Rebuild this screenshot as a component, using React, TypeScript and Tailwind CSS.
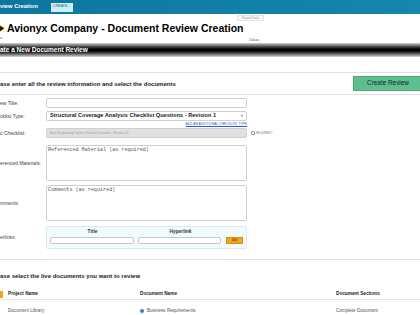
import React from "react";

const Label = ({ text }: { text: string }) => (
  <div className="w-[46px] shrink-0 text-[5px] leading-none text-[#444]">{text}</div>
);

const TopBar = () => (
  <div className="h-[14px] bg-gradient-to-r from-[#0b77a0] to-[#1586ae] flex items-center">
    <span className="text-[5.8px] font-semibold text-white leading-none">view Creation</span>
    <button className="ml-[13px] h-[9px] w-[22px] bg-[#cdeff6] text-[3.6px] leading-none text-[#1a5c7a] flex items-center justify-center">
      CREATE...
    </button>
  </div>
);

const TitleBlock = () => (
  <div className="relative h-[29px]">
    <div className="absolute left-[237px] top-[1px] h-[6px] w-[27px] border border-[#e4e4e4] bg-[#f7f7f7] text-[2.8px] leading-none text-[#999] flex items-center justify-center">
      Expand Tools
    </div>
    <div className="flex items-center pt-[8px] h-[20px]">
      <svg width="7" height="9" viewBox="0 0 7 9" className="shrink-0">
        <polygon points="0,1 5,4 0,8" fill="#f59e0b" />
        <polygon points="0,2 4,4.5 0,7" fill="#111" />
      </svg>
      <h1 className="text-[10.5px] font-bold leading-none text-black whitespace-nowrap">
        Avionyx Company - Document Review Creation
      </h1>
    </div>
    <div className="flex items-start mt-[3px]">
      <span className="text-[2.8px] leading-none text-[#555]">ar</span>
      <span className="ml-[247px] mt-[2px] text-[2.8px] leading-none text-[#555]">Dakuan</span>
    </div>
  </div>
);

const BlackBar = () => (
  <div className="h-[14px] bg-gradient-to-b from-[#d4d4d4] via-[#000] to-[#dcdcdc] flex items-center">
    <span className="text-[6.5px] font-bold leading-none text-white">ate a New Document Review</span>
  </div>
);

const inputCls = "h-[10px] w-[201px] rounded-[2px] border border-[#cfcfcf] bg-white";

const TextArea = ({ text }: { text: string }) => (
  <div className="h-[36px] w-[201px] rounded-[2px] border border-[#cfcfcf] bg-white px-[1px] pt-[2px] text-[5.1px] leading-none">
    <div className="text-[#555] font-['Liberation_Mono',monospace] whitespace-nowrap">{text}</div>
  </div>
);

const FormArea = () => (
  <div className="flex flex-col">
    <div className="flex items-center mt-[3px]">
      <Label text="ew Title:" />
      <div className={inputCls} />
    </div>
    <div className="flex items-center mt-[3px]">
      <Label text="cklist Type:" />
      <div className={`${inputCls} flex items-center justify-between px-[3px]`}>
        <span className="text-[5.6px] font-bold leading-none text-[#222] whitespace-nowrap">
          Structural Coverage Analysis Checklist Questions - Revision 1
        </span>
        <span className="text-[4px] leading-none text-[#777]">▾</span>
      </div>
    </div>
    <div className="flex mt-[2px] w-[247px] justify-end">
      <a className="text-[3.3px] leading-none text-[#3355cc] underline whitespace-nowrap">
        ADD AN ADDITIONAL CHECKLIST TYPE
      </a>
    </div>
    <div className="flex items-center mt-[2px]">
      <Label text="c Checklist:" />
      <div className="h-[10px] w-[201px] rounded-[2px] border border-[#cfcfcf] bg-[#e0e0e0] flex items-center px-[3px]">
        <span className="text-[2.9px] leading-none text-[#999] whitespace-nowrap">
          Basic Engineering Content Checklist Questions - Revision 14
        </span>
      </div>
      <div className="ml-[4px] h-[4px] w-[4px] rounded-[1px] border border-[#999] bg-white" />
      <span className="ml-[1px] text-[2.8px] leading-none text-[#777]">REQUIRED?</span>
    </div>
    <div className="flex items-center mt-[7px]">
      <Label text="erenced Materials:" />
      <TextArea text="Referenced Material (as required)" />
    </div>
    <div className="flex items-center mt-[4px]">
      <Label text="mments:" />
      <TextArea text="Comments (as required)" />
    </div>
    <div className="flex items-center mt-[5px]">
      <Label text="erlinks:" />
      <div className="h-[23px] w-[201px] rounded-[2px] border border-[#d6ecf1] bg-[#f1fbfd] px-[3px] pt-[3px]">
        <div className="flex text-[4.8px] font-bold leading-none text-[#333]">
          <span className="w-[85px] text-center">Title</span>
          <span className="ml-[3px] w-[85px] text-center">Hyperlink</span>
        </div>
        <div className="flex items-center mt-[2px]">
          <div className="h-[7px] w-[85px] rounded-[2px] border border-[#c8c8c8] bg-white" />
          <div className="ml-[4px] h-[7px] w-[84px] rounded-[2px] border border-[#c8c8c8] bg-white" />
          <button className="ml-[5px] h-[7px] w-[17px] bg-[#f5a21e] border border-[#e08b0a] text-[3px] leading-none text-[#6a3d00] flex items-center justify-center">
            Add
          </button>
        </div>
      </div>
    </div>
  </div>
);

const DocTable = () => (
  <div className="mt-[10px] border-t border-[#e2e2e2]">
    <div className="h-[30px] flex items-center pt-[1px]">
      <span className="text-[6px] font-bold leading-none text-[#222]">
        ase select the live documents you want to review
      </span>
    </div>
    <div className="grid grid-cols-[140px_196px_1fr] items-center h-[10px] border-b border-[#e6e6e6] text-[4.7px] font-bold leading-none text-[#222]">
      <div className="flex items-center">
        <div className="h-[7px] w-[3px] bg-[#f5a21e]" />
        <span className="ml-[5px]">Project Name</span>
      </div>
      <span>Document Name</span>
      <span>Document Sections</span>
    </div>
    <div className="grid grid-cols-[140px_196px_1fr] items-center h-[21px] text-[4.6px] leading-none text-[#555]">
      <span className="pl-[8px]">Document Library</span>
      <div className="flex items-center">
        <div className="h-[4px] w-[4px] rounded-full bg-[#3a7bd5]" />
        <span className="ml-[3px]">Business Requirements</span>
      </div>
      <span>Complete Document</span>
    </div>
  </div>
);

export default function App() {
  return (
    <div className="w-[420px] h-[315px] overflow-hidden bg-white font-['Liberation_Sans',Arial,sans-serif]">
      <TopBar />
      <TitleBlock />
      <BlackBar />
      <div className="mt-[15px] border-t border-[#e2e2e2]">
        <div className="h-[22px] flex items-center justify-between border-b border-[#e2e2e2]">
          <span className="text-[6px] font-bold leading-none text-[#222]">
            ase enter all the review information and select the documents
          </span>
          <button className="h-[15px] w-[70px] -mr-[3px] bg-[#5dbf8d] border border-[#4caa7a] text-[6.4px] leading-none text-[#1c1c1c] flex items-center justify-center">
            Create Review
          </button>
        </div>
        <FormArea />
      </div>
      <DocTable />
    </div>
  );
}
